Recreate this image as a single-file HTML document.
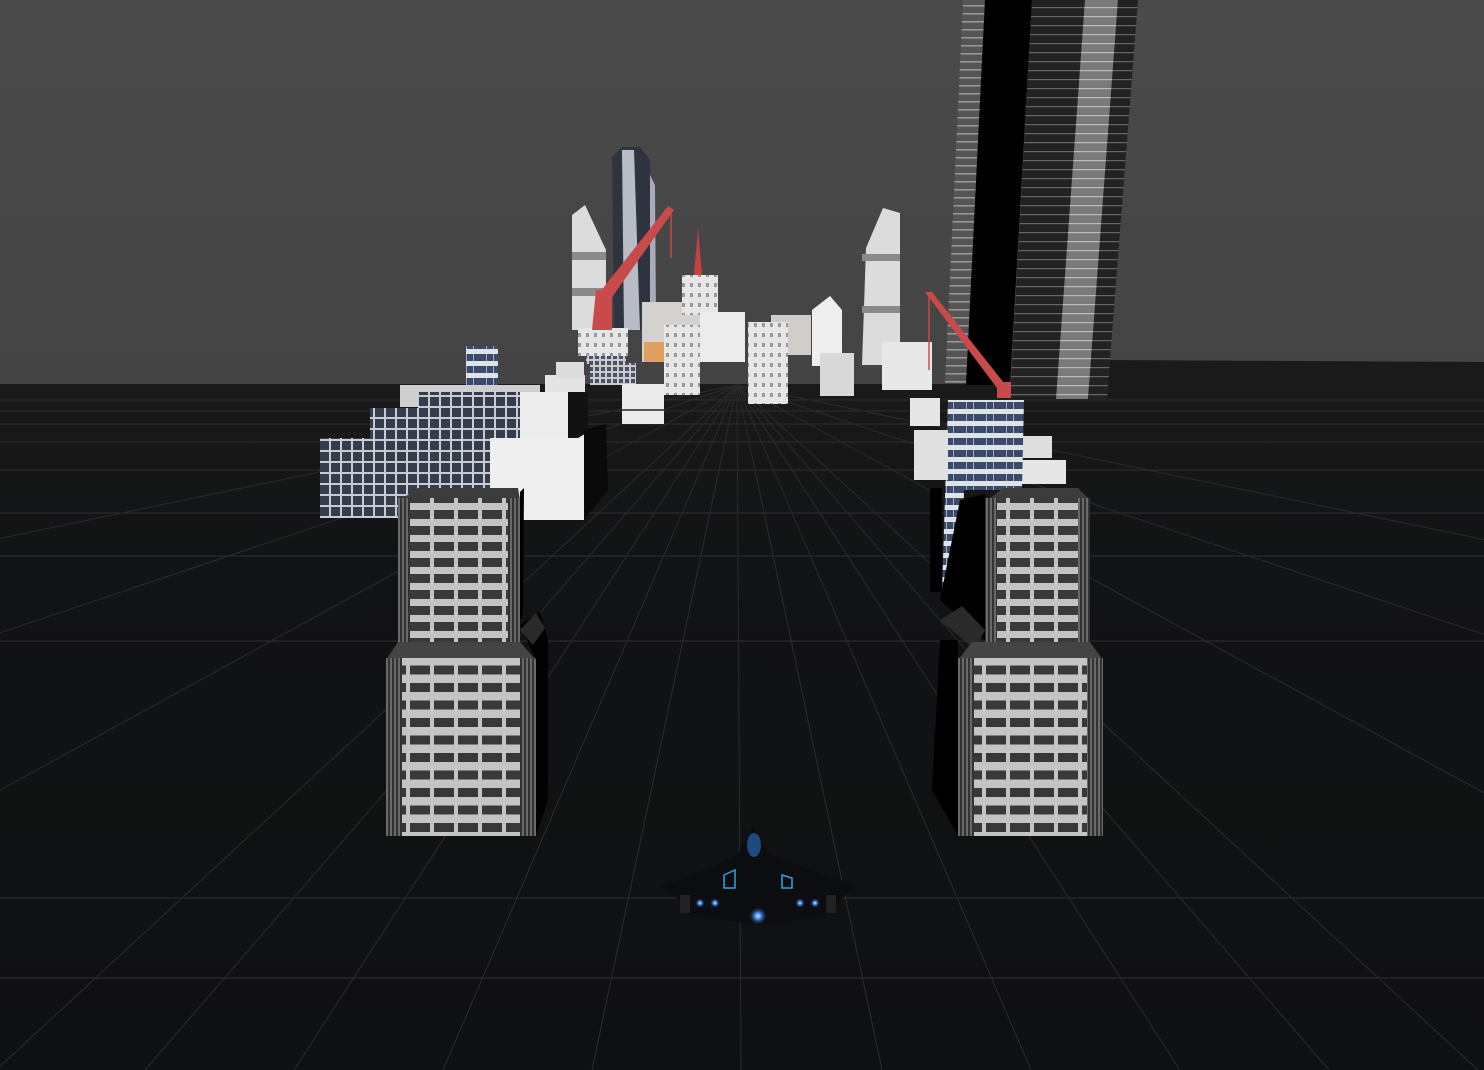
<!DOCTYPE html>
<html><head><meta charset="utf-8"><style>
html,body{margin:0;padding:0;background:#111213;overflow:hidden}
svg{display:block}
</style></head><body>
<svg width="1484" height="1070" viewBox="0 0 1484 1070" xmlns="http://www.w3.org/2000/svg">
<defs>
<linearGradient id="sky" x1="0" y1="0" x2="0" y2="1">
<stop offset="0" stop-color="#4a4a4a"/><stop offset="1" stop-color="#444"/>
</linearGradient>
<linearGradient id="gnd" x1="0" y1="0" x2="0" y2="1">
<stop offset="0" stop-color="#1a1a1b"/><stop offset="0.25" stop-color="#121314"/><stop offset="1" stop-color="#0f1011"/>
</linearGradient>
<pattern id="stripeA" x="0" y="494" width="24" height="16" patternUnits="userSpaceOnUse">
<rect width="24" height="16" fill="#c4c4c4"/><rect x="2" y="0" width="20" height="9" fill="#3a3a3a"/>
</pattern>
<pattern id="stripeB" x="0" y="648" width="24" height="17.5" patternUnits="userSpaceOnUse">
<rect width="24" height="17.5" fill="#c4c4c4"/><rect x="2" y="0" width="20" height="9" fill="#383838"/>
</pattern>
<pattern id="side" x="0" y="0" width="4" height="17" patternUnits="userSpaceOnUse">
<rect width="4" height="17" fill="#6a6a6a"/><rect width="2" height="17" fill="#333"/>
</pattern>
<pattern id="twr" x="0" y="0" width="10" height="9" patternUnits="userSpaceOnUse">
<rect width="10" height="9" fill="#222"/><rect y="7" width="10" height="1.2" fill="#666"/>
</pattern>
<pattern id="twrL" x="0" y="0" width="10" height="9" patternUnits="userSpaceOnUse">
<rect width="10" height="9" fill="#7a7a7a"/><rect y="7" width="10" height="1.2" fill="#bbb"/>
</pattern>
<pattern id="twrS" x="0" y="0" width="10" height="8" patternUnits="userSpaceOnUse">
<rect width="10" height="8" fill="#555"/><rect y="5" width="10" height="1.5" fill="#999"/>
</pattern>
<pattern id="glass" x="0" y="0" width="11" height="11" patternUnits="userSpaceOnUse">
<rect width="11" height="11" fill="#c8ccd2"/><rect x="1" y="1" width="9" height="9" fill="#353d4c"/>
</pattern>
<pattern id="glass2" x="0" y="0" width="6" height="6" patternUnits="userSpaceOnUse">
<rect width="6" height="6" fill="#ccc"/><rect x="1" y="1" width="4" height="4" fill="#4a5468"/>
</pattern>
<pattern id="blue" x="0" y="400" width="20" height="12" patternUnits="userSpaceOnUse">
<rect width="20" height="12" fill="#dfe3ea"/><rect y="2" width="20" height="7" fill="#3a4a6a"/><rect x="6" y="2" width="1" height="7" fill="#aab"/><rect x="13" y="2" width="1" height="7" fill="#aab"/>
</pattern>
<pattern id="win" x="0" y="0" width="8" height="10" patternUnits="userSpaceOnUse">
<rect width="8" height="10" fill="#e6e6e6"/><rect x="2" y="3" width="3" height="4" fill="#999"/>
</pattern>
<radialGradient id="glow"><stop offset="0" stop-color="#cfe6ff"/><stop offset="0.4" stop-color="#3a7ad8"/><stop offset="1" stop-color="#102040" stop-opacity="0"/></radialGradient>
</defs>

<rect width="1484" height="386" fill="url(#sky)"/>
<rect y="384" width="1484" height="686" fill="url(#gnd)"/>
<polygon points="1100,360 1484,362 1484,386 1100,390" fill="#1a1a1b"/>

<!-- grid -->
<g stroke="#2f3031" stroke-width="1" fill="none">
<line x1="0" y1="898" x2="1484" y2="898"/>
<line x1="0" y1="978" x2="1484" y2="978"/>
<line x1="0" y1="641" x2="1484" y2="641"/>
<line x1="0" y1="556" x2="1484" y2="556"/>
<line x1="0" y1="513" x2="1484" y2="513"/>
<line x1="0" y1="470" x2="1484" y2="470"/>
<line x1="0" y1="442" x2="1484" y2="442"/>
<line x1="0" y1="424" x2="1484" y2="424"/>
<line x1="0" y1="411" x2="1484" y2="411"/>
<line x1="0" y1="400" x2="1484" y2="400"/>
</g>
<g stroke="#2a2b2c" stroke-width="1">
<line x1="737" y1="385" x2="741" y2="1070"/>
<line x1="737" y1="385" x2="592" y2="1070"/><line x1="737" y1="385" x2="882" y2="1070"/>
<line x1="737" y1="385" x2="443" y2="1070"/><line x1="737" y1="385" x2="1031" y2="1070"/>
<line x1="737" y1="385" x2="294" y2="1070"/><line x1="737" y1="385" x2="1180" y2="1070"/>
<line x1="737" y1="385" x2="145" y2="1070"/><line x1="737" y1="385" x2="1329" y2="1070"/>
<line x1="737" y1="385" x2="-4" y2="1070"/><line x1="737" y1="385" x2="1478" y2="1070"/>
<line x1="737" y1="385" x2="-200" y2="900"/><line x1="737" y1="385" x2="1680" y2="900"/>
<line x1="737" y1="385" x2="-200" y2="700"/><line x1="737" y1="385" x2="1680" y2="700"/>
<line x1="737" y1="385" x2="-200" y2="580"/><line x1="737" y1="385" x2="1680" y2="580"/>
</g>

<!-- big tower right -->
<polygon points="963,0 985,0 966,383 945,383" fill="url(#twrS)"/>
<polygon points="985,0 1032,0 1010,385 966,385" fill="#000"/>
<polygon points="1032,0 1085,0 1058,398 1010,398" fill="url(#twr)"/>
<polygon points="1085,0 1118,0 1088,399 1056,399" fill="url(#twrL)"/>
<polygon points="1118,0 1138,0 1107,399 1088,399" fill="url(#twr)"/>

<!-- mid tower -->
<polygon points="612,157 622,147 640,147 650,160 652,330 614,330" fill="#2e3440"/>
<polygon points="622,150 634,150 640,330 624,330" fill="#b8bcc4"/>
<polygon points="650,175 655,185 656,320 650,320" fill="#aab"/>
<polygon points="572,215 585,205 606,250 606,330 572,330" fill="#dcdcdc"/>
<rect x="572" y="252" width="34" height="8" fill="#8a8a8a"/>
<rect x="572" y="288" width="34" height="8" fill="#8a8a8a"/>
<polygon points="866,248 883,208 900,213 900,365 862,365" fill="#dcdcdc"/>
<rect x="862" y="254" width="38" height="7" fill="#8a8a8a"/>
<rect x="862" y="306" width="38" height="7" fill="#8a8a8a"/>
<rect x="642" y="302" width="58" height="60" fill="#d4d2ce"/>
<rect x="644" y="342" width="20" height="20" fill="#e0a060"/>
<rect x="682" y="275" width="36" height="40" fill="url(#win)"/>
<polygon points="694,275 698,228 702,275" fill="#c84040"/>
<rect x="664" y="325" width="36" height="70" fill="url(#win)"/>
<rect x="700" y="312" width="45" height="50" fill="#ececec"/>
<rect x="771" y="315" width="40" height="40" fill="#d0cec9"/>
<rect x="748" y="322" width="40" height="82" fill="url(#win)"/>
<rect x="812" y="310" width="30" height="56" fill="#eee"/>
<polygon points="812,310 830,296 842,310" fill="#eee"/>
<rect x="820" y="353" width="34" height="43" fill="#d8d8d8"/>
<rect x="882" y="342" width="50" height="48" fill="#e8e8e8"/>
<rect x="578" y="328" width="50" height="28" fill="url(#win)"/>
<rect x="586" y="356" width="40" height="8" fill="url(#glass2)"/>
<rect x="590" y="363" width="46" height="22" fill="url(#glass2)"/>
<rect x="622" y="384" width="42" height="40" fill="#ebebeb"/>
<rect x="622" y="409" width="42" height="2" fill="#555"/>
<rect x="910" y="398" width="30" height="28" fill="#e6e6e6"/>
<rect x="1022" y="460" width="44" height="24" fill="#e6e6e6"/>
<rect x="1022" y="436" width="30" height="22" fill="#ddd"/>

<g fill="#c84a4a">
<polygon points="596,290 612,290 612,330 592,330"/>
<polygon points="600,292 668,206 674,210 610,300"/>
<polygon points="925,292 932,292 1008,388 1000,392"/>
<rect x="997" y="382" width="14" height="16"/>
</g>
<line x1="671" y1="210" x2="671" y2="258" stroke="#c84a4a" stroke-width="1.5"/>
<line x1="929" y1="295" x2="929" y2="370" stroke="#c84a4a" stroke-width="1.5"/>

<rect x="466" y="346" width="32" height="40" fill="url(#blue)"/>
<rect x="545" y="375" width="40" height="18" fill="#e4e4e4"/>
<rect x="556" y="362" width="28" height="16" fill="#dcdcdc"/>
<rect x="400" y="385" width="140" height="22" fill="#cfcfcf"/>
<rect x="418" y="392" width="150" height="52" fill="url(#glass)"/>
<rect x="370" y="408" width="52" height="36" fill="url(#glass)"/>
<rect x="520" y="392" width="68" height="52" fill="#ececec"/>
<polygon points="568,392 588,392 588,432 568,444" fill="#111"/>
<rect x="320" y="438" width="170" height="80" fill="url(#glass)"/>
<rect x="490" y="438" width="94" height="82" fill="#efefef"/>
<polygon points="584,430 606,424 608,490 584,520" fill="#0a0a0a"/>

<polygon points="948,400 1024,400 1022,490 964,490 962,592 942,592" fill="url(#blue)"/>
<rect x="930" y="488" width="12" height="104" fill="#000"/>
<rect x="914" y="430" width="34" height="50" fill="#e0e0e0"/>

<polygon points="400,500 418,488 518,488 520,500" fill="#3c3c3c"/>
<rect x="398" y="498" width="122" height="144" fill="url(#stripeA)"/>
<rect x="398" y="498" width="12" height="144" fill="url(#side)"/>
<rect x="508" y="498" width="12" height="144" fill="url(#side)"/>
<polygon points="520,492 524,488 523,615 520,620" fill="#000"/>
<polygon points="398,642 520,642 536,660 386,660" fill="#444"/>
<rect x="386" y="658" width="150" height="178" fill="url(#stripeB)"/>
<rect x="386" y="658" width="16" height="178" fill="url(#side)"/>
<rect x="520" y="658" width="16" height="178" fill="url(#side)"/>
<polygon points="520,625 540,612 548,640 548,800 536,836 536,660" fill="#020202"/>
<polygon points="520,630 536,613 545,628 533,645" fill="#2a2a2a"/>

<polygon points="988,500 1003,488 1078,488 1090,500" fill="#3c3c3c"/>
<rect x="985" y="498" width="105" height="144" fill="url(#stripeA)"/>
<rect x="985" y="498" width="12" height="144" fill="url(#side)"/>
<rect x="1078" y="498" width="12" height="144" fill="url(#side)"/>
<polygon points="985,494 960,500 940,600 985,640" fill="#000"/>
<polygon points="940,620 962,606 985,630 975,650" fill="#2a2a2a"/>
<polygon points="972,642 1090,642 1103,660 958,660" fill="#444"/>
<rect x="958" y="658" width="145" height="178" fill="url(#stripeB)"/>
<rect x="958" y="658" width="16" height="178" fill="url(#side)"/>
<rect x="1087" y="658" width="16" height="178" fill="url(#side)"/>
<polygon points="958,640 940,640 932,790 958,836" fill="#000"/>

<g>
<polygon points="752,826 770,855 840,880 858,885 840,900 830,915 760,925 690,915 680,900 660,885 680,880 738,855" fill="#0c0d10"/>
<ellipse cx="754" cy="845" rx="7" ry="12" fill="#1e4a80"/>
<path d="M724 875 L735 870 L735 888 L724 888 Z M782 875 L792 878 L792 888 L782 888 Z" fill="none" stroke="#2aa8d8" stroke-width="1.5"/>
<rect x="680" y="895" width="10" height="18" fill="#222"/>
<rect x="826" y="895" width="10" height="18" fill="#222"/>
<circle cx="700" cy="903" r="5" fill="url(#glow)"/>
<circle cx="715" cy="903" r="5" fill="url(#glow)"/>
<circle cx="800" cy="903" r="5" fill="url(#glow)"/>
<circle cx="815" cy="903" r="5" fill="url(#glow)"/>
<circle cx="758" cy="916" r="9" fill="url(#glow)"/>
</g>
</svg>
</body></html>
